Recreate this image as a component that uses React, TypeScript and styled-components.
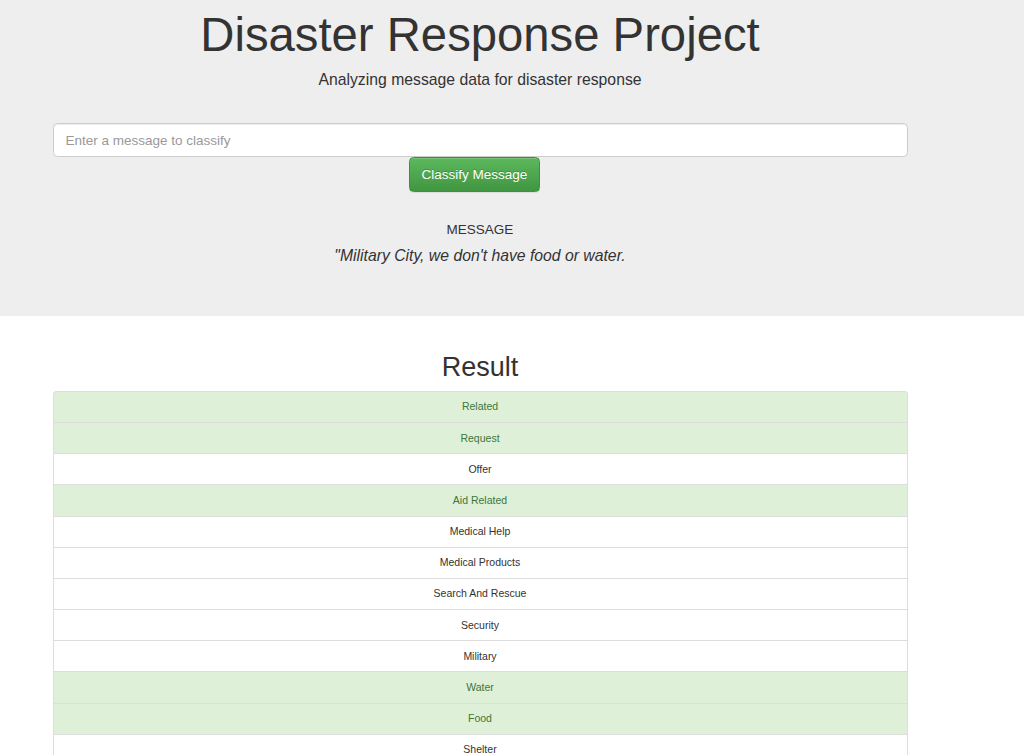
import { createGlobalStyle, styled } from 'styled-components';

const categories: { name: string; hit: boolean }[] = [
  { name: 'Related', hit: true },
  { name: 'Request', hit: true },
  { name: 'Offer', hit: false },
  { name: 'Aid Related', hit: true },
  { name: 'Medical Help', hit: false },
  { name: 'Medical Products', hit: false },
  { name: 'Search And Rescue', hit: false },
  { name: 'Security', hit: false },
  { name: 'Military', hit: false },
  { name: 'Water', hit: true },
  { name: 'Food', hit: true },
  { name: 'Shelter', hit: false },
  { name: 'Clothing', hit: false },
  { name: 'Money', hit: false },
];

const App = () => {
  return (
    <>
      <GlobalStyle />
      <Jumbotron>
        <Container>
          <Title>Disaster Response Project</Title>
          <Subtitle>Analyzing message data for disaster response</Subtitle>
          <Form>
            <MessageInput type="text" placeholder="Enter a message to classify" />
            <BtnRow>
              <ClassifyBtn type="button">Classify Message</ClassifyBtn>
            </BtnRow>
          </Form>
          <MessageLabel>MESSAGE</MessageLabel>
          <Quote>"Military City, we don't have food or water.</Quote>
        </Container>
      </Jumbotron>
      <Container>
        <ResultTitle>Result</ResultTitle>
        <List>
          {categories.map((c) => (
            <Item key={c.name} $hit={c.hit}>
              {c.name}
            </Item>
          ))}
        </List>
      </Container>
    </>
  );
};

export default App;

const GlobalStyle = createGlobalStyle`
  * { box-sizing: border-box; }
  body {
    margin: 0;
    background: #fff;
    color: #333;
    font-family: "Liberation Sans", Arial, sans-serif;
    font-size: 10.5px;
    line-height: 1.42857;
  }
`;

const Jumbotron = styled.div`
  background-color: #eee;
  padding: 9px 0 48px;
`;

const Container = styled.div`
  width: 855px;
  margin-left: 52.5px;
`;

const Title = styled.h1`
  margin: 0 0 8.5px;
  font-size: 47.25px;
  font-weight: 400;
  line-height: 1.1;
  text-align: center;
`;

const Subtitle = styled.p`
  margin: 0;
  font-size: 15.75px;
  line-height: 22.5px;
  text-align: center;
`;

const Form = styled.form`
  margin-top: 31px;
  display: flex;
  flex-direction: column;
`;

const MessageInput = styled.input`
  width: 100%;
  height: 34.5px;
  padding: 7.5px 12px;
  font-family: inherit;
  font-size: 13.5px;
  color: #555;
  background: #fff;
  border: 1px solid #ccc;
  border-radius: 4.5px;
  box-shadow: inset 0 1px 1px rgba(0, 0, 0, 0.075);
  outline: none;

  &::placeholder {
    color: #999;
  }
`;

const BtnRow = styled.div`
  display: flex;
  padding-left: 356px;
`;

const ClassifyBtn = styled.button`
  height: 34.5px;
  padding: 0 12px;
  font-family: inherit;
  font-size: 13.5px;
  color: #fff;
  text-shadow: 0 -1px 0 rgba(0, 0, 0, 0.2);
  background-image: linear-gradient(to bottom, #5cb85c 0, #419641 100%);
  border: 1px solid #3e8f3e;
  border-radius: 4.5px;
  box-shadow: inset 0 1px 0 rgba(255, 255, 255, 0.15), 0 1px 1px rgba(0, 0, 0, 0.075);
  cursor: pointer;
`;

const MessageLabel = styled.p`
  margin: 28px 0 0;
  font-size: 13.5px;
  line-height: 19.3px;
  text-align: center;
`;

const Quote = styled.p`
  margin: 6px 0 0;
  font-size: 15.75px;
  font-style: italic;
  line-height: 22.5px;
  text-align: center;
`;

const ResultTitle = styled.h1`
  margin: 37px 0 8.5px;
  font-size: 27px;
  font-weight: 400;
  line-height: 1.1;
  text-align: center;
`;

const List = styled.div`
  display: flex;
  flex-direction: column;
`;

const Item = styled.div<{ $hit: boolean }>`
  padding: 7.5px 11.25px;
  margin-bottom: -1px;
  font-size: 10.5px;
  line-height: 15.15px;
  text-align: center;
  color: ${({ $hit }) => ($hit ? '#3c763d' : '#333')};
  background-color: ${({ $hit }) => ($hit ? '#dff0d8' : '#fff')};
  border: 1px solid #ddd;

  &:first-child {
    border-top-left-radius: 3px;
    border-top-right-radius: 3px;
  }
`;
